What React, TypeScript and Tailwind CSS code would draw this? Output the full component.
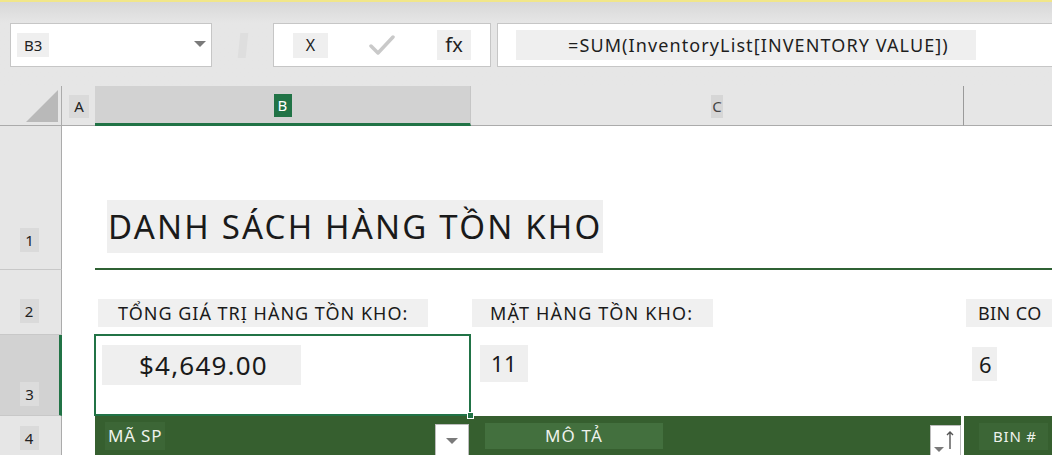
import type { ReactNode } from 'react'

// light grey plate behind a label
function Plate({ className = '', children }: { className?: string; children: ReactNode }) {
  return <span className={`inline-flex items-center ${className}`}>{children}</span>
}

function Caret({ className = '' }: { className?: string }) {
  return (
    <span
      className={`block w-0 h-0 border-l-[6px] border-r-[6px] border-t-[6px] border-l-transparent border-r-transparent border-t-[#7a7a7a] ${className}`}
    />
  )
}

function FormulaBar() {
  return (
    <div className="h-[84px] bg-gradient-to-b from-[#d8d8d8] via-[#e6e6e6] via-25% to-[#e6e6e6] pt-[21px]">
      <div className="flex h-[44px] items-stretch">
        {/* name box */}
        <div className="ml-[10px] w-[202px] bg-white border border-[#c6c6c6] flex items-center pl-[6px] pr-[3px]">
          <Plate className="h-[24px] px-[7px] bg-[#efefef] text-[15px] text-[#222]">B3</Plate>
          <Caret className="ml-auto mr-[2px] -mt-[2px]" />
        </div>
        <div className="w-[61px] flex items-center justify-center">
          <span className="w-[8px] h-[25px] bg-[#dedede] -skew-x-6" />
        </div>
        {/* cancel / enter / insert function */}
        <div className="w-[218px] bg-white border border-[#c6c6c6] flex items-center pl-[19px]">
          <Plate className="h-[25px] w-[35px] justify-center bg-[#efefef] text-[16px] text-[#222]">X</Plate>
          <svg viewBox="0 0 26 22" className="ml-[41px] w-[26px] h-[22px]" fill="none" aria-hidden>
            <path d="M2 12l7 7L24 3" stroke="#c9c9c9" strokeWidth="3.5" strokeLinecap="round" strokeLinejoin="round" />
          </svg>
          <Plate className="ml-[42px] h-[30px] w-[34px] justify-center bg-[#efefef] text-[20px] text-[#222]">fx</Plate>
        </div>
        <div className="ml-[6px] flex-1 bg-white border border-[#c6c6c6] border-r-0 flex items-center pl-[18px]">
          <Plate className="h-[30px] pl-[52px] pr-[27px] bg-[#efefef] text-[18px] tracking-[1.1px] text-[#1e1e1e] whitespace-nowrap">
            =SUM(InventoryList[INVENTORY VALUE])
          </Plate>
        </div>
      </div>
    </div>
  )
}

function ColumnHeaders() {
  return (
    <div className="flex h-[40px] bg-[#e6e6e6] text-[15px] text-[#222]">
      <div className="w-[62px] border-b border-r border-[#ababab] flex items-end justify-end pr-[3px] pb-[3px]">
        <svg viewBox="0 0 32 32" className="w-[32px] h-[32px]" aria-hidden>
          <polygon points="32,0 32,32 0,32" fill="#b9b9b9" />
        </svg>
      </div>
      <div className="w-[33px] border-b border-[#ababab] flex items-center pl-[7px] pt-[1px]">
        <Plate className="h-[23px] w-[20px] justify-center bg-[#dadada]">A</Plate>
      </div>
      <div className="w-[376px] bg-[#d2d2d2] border-b-[3px] border-[#217346] border-r border-r-[#c6c6c6] flex items-center justify-center pt-[2px]">
        <Plate className="h-[23px] w-[18px] justify-center bg-[#217346] text-white">B</Plate>
      </div>
      <div className="w-[493px] border-b border-r border-[#ababab] border-r-[#9a9a9a] flex items-center justify-center pt-[1px]">
        <Plate className="h-[23px] w-[12px] justify-center bg-[#d6d6d6] text-[#444]">C</Plate>
      </div>
      <div className="flex-1 border-b border-[#ababab]" />
    </div>
  )
}

function RowHead({ n, h, pt, selected = false }: { n: number; h: string; pt: string; selected?: boolean }) {
  return (
    <div
      className={`w-[62px] ${h} ${pt} shrink-0 border-b border-[#c8c8c8] pl-[20px] text-[15px] text-[#222] ${
        selected ? 'bg-[#d2d2d2] border-r-[3px] border-r-[#217346]' : 'bg-[#e6e6e6] border-r border-r-[#ababab]'
      }`}
    >
      <Plate className={`h-[24px] w-[19px] justify-center ${selected ? 'bg-[#dcdcdc]' : 'bg-[#dadada]'}`}>{n}</Plate>
    </div>
  )
}

function Sheet() {
  return (
    <div className="text-[#1a1a1a]">
      {/* row 1: title */}
      <div className="flex h-[144px]">
        <RowHead n={1} h="h-[144px]" pt="pt-[102px]" />
        <div className="w-[33px]" />
        <div className="flex-1 border-b-2 border-[#2f6134] pl-[12px] pt-[74px]">
          <Plate className="h-[53px] pl-[1px] pr-[1px] bg-[#efefef] text-[33px] tracking-[2.2px] whitespace-nowrap">
            DANH SÁCH HÀNG TỒN KHO
          </Plate>
        </div>
      </div>

      {/* row 2: summary labels */}
      <div className="flex h-[65px] text-[18px] tracking-[1px]">
        <RowHead n={2} h="h-[65px]" pt="pt-[29px]" />
        <div className="w-[33px]" />
        <div className="w-[376px] pl-[3px] pt-[29px]">
          <Plate className="h-[28px] w-[330px] pl-[20px] bg-[#f0f0f0] whitespace-nowrap">TỔNG GIÁ TRỊ HÀNG TỒN KHO:</Plate>
        </div>
        <div className="w-[493px] pl-[1px] pt-[29px]">
          <Plate className="h-[28px] w-[241px] pl-[18px] bg-[#f0f0f0] tracking-[1.2px] whitespace-nowrap">MẶT HÀNG TỒN KHO:</Plate>
        </div>
        <div className="flex-1 pl-[2px] pt-[29px]">
          <Plate className="h-[28px] w-full pl-[12px] bg-[#f0f0f0] tracking-[0.4px] whitespace-nowrap">BIN CO</Plate>
        </div>
      </div>

      {/* row 3: totals */}
      <div className="flex h-[81px]">
        <RowHead n={3} h="h-[81px]" pt="pt-[47px]" selected />
        <div className="w-[32px]" />
        <div className="relative w-[377px] pl-[8px] pt-[10px]">
          <Plate className="h-[40px] w-[199px] pl-[37px] bg-[#efefef] text-[26px] tracking-[1.2px]">$4,649.00</Plate>
          <div className="absolute -top-[1px] left-0 right-0 bottom-0 border-2 border-[#217346]" />
          <div className="absolute -right-[3px] -bottom-[3px] w-[7px] h-[7px] bg-[#217346] border border-white" />
        </div>
        <div className="w-[493px] pl-[9px] pt-[10px]">
          <Plate className="h-[37px] w-[48px] pl-[11px] bg-[#efefef] text-[22px] tracking-[0.5px]">11</Plate>
        </div>
        <div className="flex-1 pl-[8px] pt-[12px]">
          <Plate className="h-[34px] w-[25px] pl-[7px] bg-[#efefef] text-[22px]">6</Plate>
        </div>
      </div>

      {/* row 4: table header */}
      <div className="flex h-[40px] text-[17px] tracking-[0.8px] text-[#eef2ec]">
        <RowHead n={4} h="h-[40px]" pt="pt-[10px]" />
        <div className="w-[33px]" />
        <div className="w-[376px] bg-[#365f2f] flex items-start pl-[10px] pt-[6px]">
          <Plate className="h-[28px] px-[3px] bg-[#3c6636]">MÃ SP</Plate>
          <div className="ml-auto mr-[2px] mt-[2px] w-[34px] h-[34px] bg-white border border-[#bdbdbd] flex items-center justify-center">
            <Caret />
          </div>
        </div>
        <div className="w-[493px] bg-[#365f2f] border-r-[3px] border-white flex items-start pl-[14px] pt-[7px]">
          <Plate className="h-[26px] w-[178px] justify-center bg-[#43703e] tracking-[1.2px]">MÔ TẢ</Plate>
          <div className="ml-auto mt-[2px] w-[31px] h-[32px] bg-white border border-[#bdbdbd] flex items-end pl-[3px] pb-[4px]">
            <span className="block w-0 h-0 border-l-[5px] border-r-[5px] border-t-[5px] border-l-transparent border-r-transparent border-t-[#7a7a7a]" />
            <svg viewBox="0 0 8 20" className="ml-[2px] mb-[2px] w-[8px] h-[20px]" aria-hidden>
              <path d="M4 19V2M1 5l3-3 3 3" stroke="#555" strokeWidth="1.4" fill="none" />
            </svg>
          </div>
        </div>
        <div className="flex-1 bg-[#365f2f] pl-[15px] pt-[7px]">
          <Plate className="h-[27px] w-[69px] pl-[14px] bg-[#3c6636] text-[15px] whitespace-nowrap">BIN #</Plate>
        </div>
      </div>
    </div>
  )
}

export default function App() {
  return (
    <div className="w-[1052px] h-[455px] overflow-hidden bg-white font-['Noto_Sans','Open_Sans',sans-serif]">
      <div className="h-[2px] bg-[#f1e68a]" />
      <FormulaBar />
      <ColumnHeaders />
      <Sheet />
    </div>
  )
}
